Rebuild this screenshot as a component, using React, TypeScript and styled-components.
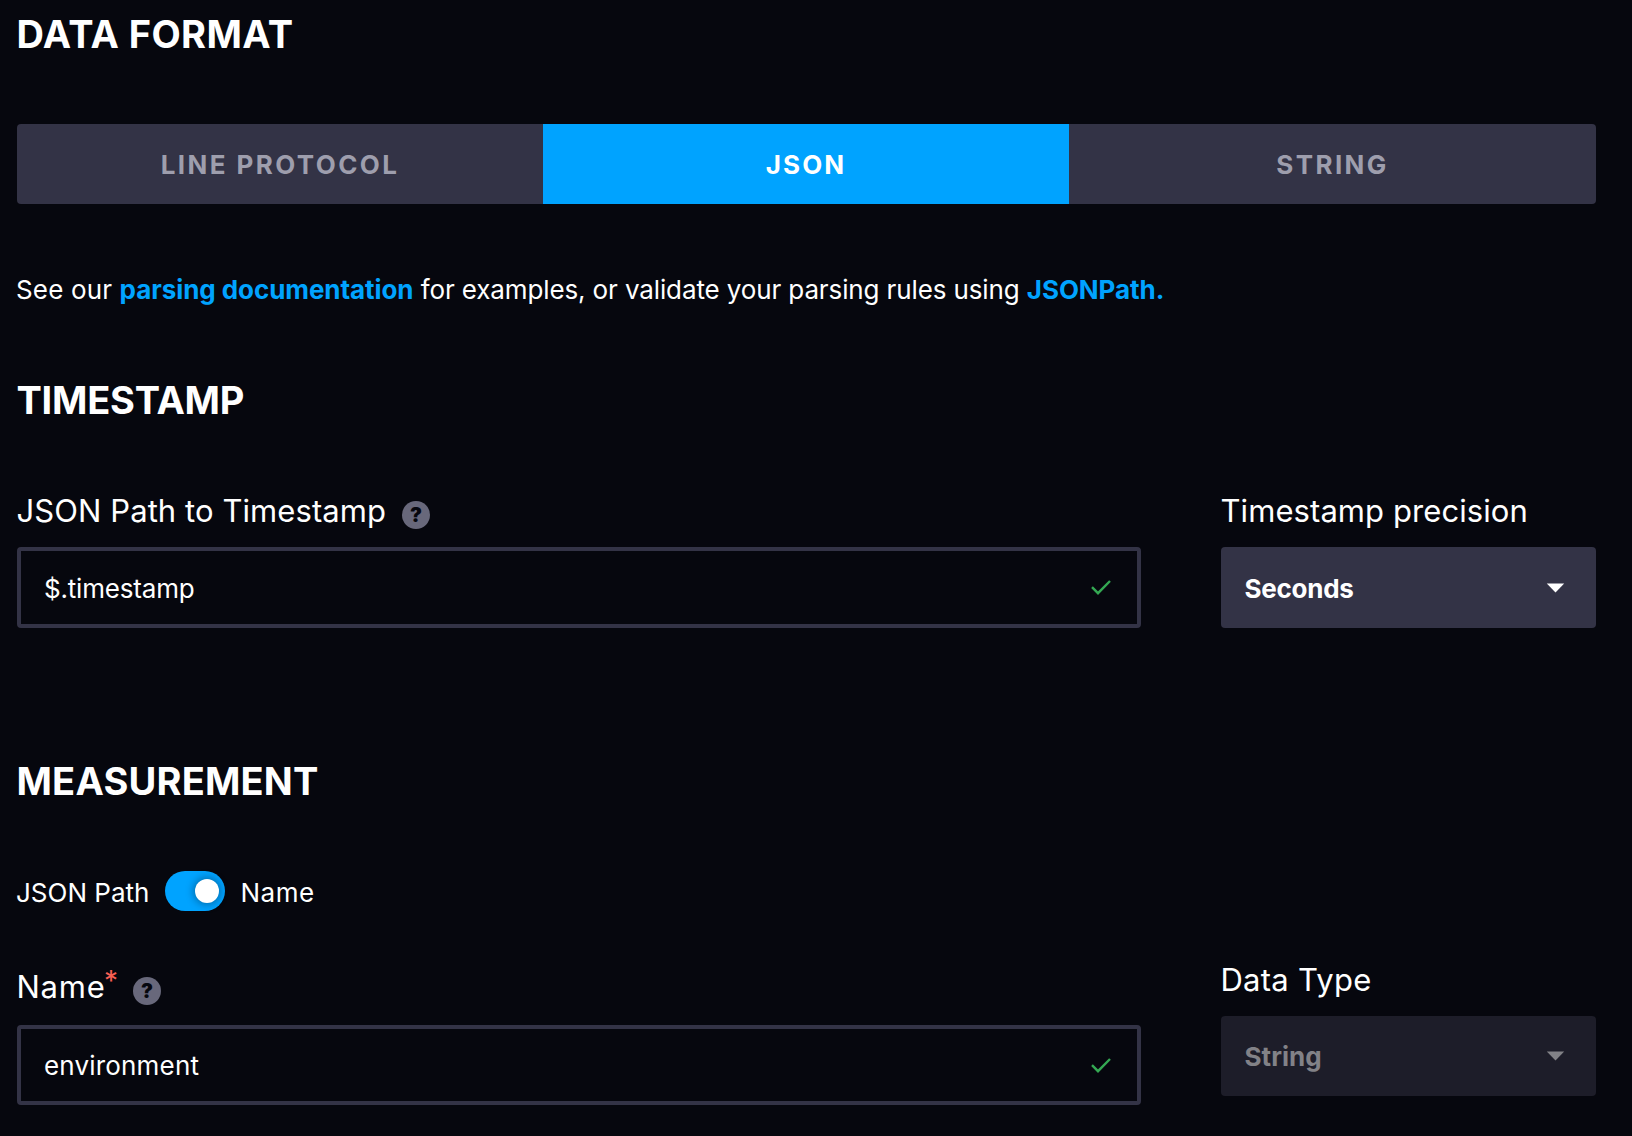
import React from 'react';
import styled, { createGlobalStyle } from 'styled-components';

const GlobalStyle = createGlobalStyle`
  *, *::before, *::after { box-sizing: border-box; }
  body {
    margin: 0;
    background: #06070e;
    color: #fff;
    font-family: Inter, "Liberation Sans", sans-serif;
    font-size: 26px;
    font-weight: 400;
  }
`;

const Page = styled.main`
  width: 1632px;
  min-height: 1136px;
  padding: 11px 36px 0 17px;
  overflow: hidden;
`;

const Heading = styled.h2<{ $gap?: number; $spacing: number }>`
  margin: ${(p) => p.$gap ?? 0}px 0 0 -0.5px;
  font-size: 38px;
  font-weight: 700;
  line-height: 46px;
  letter-spacing: ${(p) => p.$spacing}px;
`;

const Tabs = styled.div`
  display: grid;
  grid-template-columns: 526px 526px 1fr;
  height: 80px;
  margin-top: 67px;
  border-radius: 4px;
  overflow: hidden;
`;

const Tab = styled.button<{ $active?: boolean }>`
  border: 0;
  padding: 0;
  background: ${(p) => (p.$active ? '#00a3ff' : '#333346')};
  color: ${(p) => (p.$active ? '#fff' : '#9e9ead')};
  font: 700 26px Inter, "Liberation Sans", sans-serif;
  letter-spacing: ${(p) => (p.$active ? 2.1 : 2.4)}px;
`;

const Help = styled.p`
  margin: 70px 0 0 -1px;
  line-height: 32px;
  letter-spacing: -0.12px;
  white-space: nowrap;
`;

const Lead = styled.span`
  letter-spacing: 0.15px;
`;

const Link = styled.a`
  color: #00a3ff;
  font-weight: 700;
  letter-spacing: -0.07px;
`;

const FieldRow = styled.div<{ $gap: number }>`
  display: grid;
  grid-template-columns: 1124px 375px;
  column-gap: 80px;
  align-items: start;
  margin-top: ${(p) => p.$gap}px;
`;

const Field = styled.div<{ $offset?: number; $gap?: number }>`
  display: flex;
  flex-direction: column;
  gap: ${(p) => p.$gap ?? 17}px;
  padding-top: ${(p) => p.$offset ?? 0}px;
`;

const LabelRow = styled.div`
  display: flex;
  align-items: center;
  height: 38px;
  margin-left: -0.5px;
`;

const Label = styled.label<{ $spacing?: number }>`
  font-size: 31px;
  line-height: 38px;
  letter-spacing: ${(p) => p.$spacing ?? 0.08}px;
`;

const Required = styled.span`
  align-self: flex-start;
  margin: 1px -1px 0 -1.5px;
  color: #f95f53;
  font-size: 28px;
  line-height: 24px;
`;

const HelpBadge = styled.span`
  display: flex;
  align-items: center;
  justify-content: center;
  width: 28px;
  height: 28px;
  margin: 8px 0 0 16px;
  border-radius: 50%;
  background: #68687b;
  color: #06070e;
  font-size: 20px;
  font-weight: 900;
  line-height: 28px;
`;

const InputBox = styled.div<{ $height: number }>`
  display: flex;
  align-items: center;
  justify-content: space-between;
  height: ${(p) => p.$height}px;
  padding: 1px 26px 0 23px;
  border: 4px solid #333346;
  border-radius: 4px;
  background: #06070e;
`;

const Value = styled.span<{ $spacing?: number }>`
  letter-spacing: ${(p) => p.$spacing ?? 0}px;
`;

const Select = styled.div<{ $height: number; $disabled?: boolean }>`
  display: flex;
  align-items: center;
  justify-content: space-between;
  height: ${(p) => p.$height}px;
  padding: 1px 31px 0 23.5px;
  border-radius: 4px;
  background: ${(p) => (p.$disabled ? '#1d1d29' : '#333346')};
  color: ${(p) => (p.$disabled ? '#828287' : '#fff')};
  font-weight: 700;
`;

const Caret = styled.svg`
  width: 19px;
  height: 10px;
  margin-bottom: 1px;
  fill: currentColor;
`;

const Check = styled.svg`
  width: 20px;
  height: 15px;
  margin-bottom: 1px;
  fill: none;
  stroke: #34a853;
  stroke-width: 2.4;
`;

const ToggleRow = styled.div`
  display: flex;
  align-items: center;
  height: 40px;
  margin-top: 67px;
`;

const ToggleText = styled.span<{ $spacing?: number }>`
  padding-top: 2px;
  letter-spacing: ${(p) => p.$spacing ?? 0}px;
`;

const ToggleStart = styled.div`
  display: flex;
  width: 148px;
  margin-left: -1px;
`;

const Switch = styled.div`
  display: flex;
  align-items: center;
  justify-content: flex-end;
  width: 60px;
  height: 40px;
  margin: 0 15.5px 0 1px;
  padding: 0 6px;
  border-radius: 20px;
  background: #00a3ff;
`;

const Knob = styled.span`
  width: 24px;
  height: 24px;
  border-radius: 50%;
  background: #fff;
  box-shadow: 0 0 8px 1px rgba(7, 7, 14, 0.4);
`;

const CaretIcon = () => (
  <Caret viewBox="0 0 19 10">
    <path d="M0.8 0.5h17.4L9.5 9.6z" />
  </Caret>
);

const CheckIcon = () => (
  <Check viewBox="0 0 20 15">
    <path d="M1 7.1l6 6.1L19 1" />
  </Check>
);

export default function App() {
  return (
    <>
      <GlobalStyle />
      <Page>
        <Heading $spacing={0.4}>DATA FORMAT</Heading>
        <Tabs>
          <Tab>LINE PROTOCOL</Tab>
          <Tab $active>JSON</Tab>
          <Tab>STRING</Tab>
        </Tabs>
        <Help>
          <Lead>See our </Lead>
          <Link>parsing documentation</Link> for examples, or validate your parsing rules
          using <Link>JSONPath.</Link>
        </Help>

        <Heading $gap={71} $spacing={-0.25}>TIMESTAMP</Heading>
        <FieldRow $gap={69}>
          <Field>
            <LabelRow>
              <Label>JSON Path to Timestamp</Label>
              <HelpBadge>?</HelpBadge>
            </LabelRow>
            <InputBox $height={81}>
              <Value $spacing={-0.19}>$.timestamp</Value>
              <CheckIcon />
            </InputBox>
          </Field>
          <Field>
            <LabelRow>
              <Label>Timestamp precision</Label>
            </LabelRow>
            <Select $height={81}>
              <Value $spacing={-0.25}>Seconds</Value>
              <CaretIcon />
            </Select>
          </Field>
        </FieldRow>

        <Heading $gap={130} $spacing={0.2}>MEASUREMENT</Heading>
        <ToggleRow>
          <ToggleStart>
            <ToggleText>JSON Path</ToggleText>
          </ToggleStart>
          <Switch>
            <Knob />
          </Switch>
          <ToggleText $spacing={0.5}>Name</ToggleText>
        </ToggleRow>

        <FieldRow $gap={50}>
          <Field $offset={7} $gap={19}>
            <LabelRow>
              <Label $spacing={0.75}>Name</Label>
              <Required>*</Required>
              <HelpBadge>?</HelpBadge>
            </LabelRow>
            <InputBox $height={80}>
              <Value $spacing={0.18}>environment</Value>
              <CheckIcon />
            </InputBox>
          </Field>
          <Field>
            <LabelRow>
              <Label $spacing={0.25}>Data Type</Label>
            </LabelRow>
            <Select $height={80} $disabled>
              <Value $spacing={0.06}>String</Value>
              <CaretIcon />
            </Select>
          </Field>
        </FieldRow>
      </Page>
    </>
  );
}
